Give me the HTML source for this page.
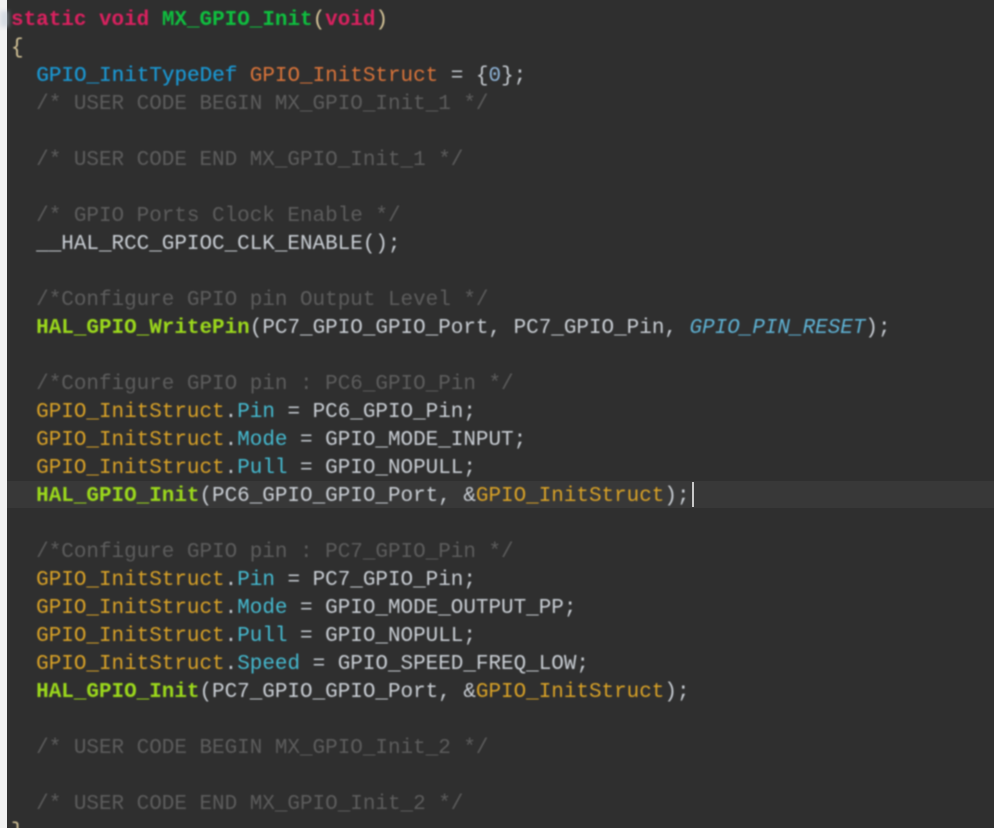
<!DOCTYPE html>
<html><head><meta charset="utf-8"><style>
html,body{margin:0;padding:0;background:#2f2f2f}
#r{position:relative;width:994px;height:828px;overflow:hidden;background:#2f2f2f}
#s{position:absolute;left:0;top:0;width:7px;height:828px;background:#f1f1f1}
#h{position:absolute;left:7px;right:0;top:481px;height:27px;background:#383838}
#c{position:absolute;left:692px;top:482px;width:2px;height:25px;background:#c8c8c8}
#m{position:absolute;left:0;top:11px;width:9px;height:16px;background:#b9c6d4;opacity:.45;filter:blur(2px)}
#t{position:absolute;left:11px;top:7px;font:20.95px/28px "Liberation Mono",monospace;color:#c9ced4;white-space:pre;filter:blur(.7px)}
.k{color:#d9215f;font-weight:bold}.f{color:#0fbf3f;font-weight:bold}.t{color:#1b95cf;text-shadow:.3px 0 0 #1b95cf}.v{color:#d9743a}
.c{color:#5d5d5d}.g{color:#9bd81c;font-weight:bold}.o{color:#d9a227}.p{color:#45b9cf}.e{color:#5fb2d4;font-style:italic}.b{color:#8fb4d8}.y{color:#d8c79a}
</style></head><body><div id="r">
<div id="h"></div><div id="s"></div><div id="m"></div><div id="c"></div>
<div id="t"><span class="k">static</span> <span class="k">void</span> <span class="f">MX_GPIO_Init</span><span class="y">(</span><span class="k">void</span><span class="y">)</span>
<span class="y">{</span>
  <span class="t">GPIO_InitTypeDef</span> <span class="v">GPIO_InitStruct</span> = {<span class="b">0</span>};
  <span class="c">/* USER CODE BEGIN MX_GPIO_Init_1 */</span>

  <span class="c">/* USER CODE END MX_GPIO_Init_1 */</span>

  <span class="c">/* GPIO Ports Clock Enable */</span>
  __HAL_RCC_GPIOC_CLK_ENABLE();

  <span class="c">/*Configure GPIO pin Output Level */</span>
  <span class="g">HAL_GPIO_WritePin</span>(PC7_GPIO_GPIO_Port, PC7_GPIO_Pin, <span class="e">GPIO_PIN_RESET</span>);

  <span class="c">/*Configure GPIO pin : PC6_GPIO_Pin */</span>
  <span class="o">GPIO_InitStruct</span>.<span class="p">Pin</span> = PC6_GPIO_Pin;
  <span class="o">GPIO_InitStruct</span>.<span class="p">Mode</span> = GPIO_MODE_INPUT;
  <span class="o">GPIO_InitStruct</span>.<span class="p">Pull</span> = GPIO_NOPULL;
  <span class="g">HAL_GPIO_Init</span>(PC6_GPIO_GPIO_Port, &amp;<span class="o">GPIO_InitStruct</span>);

  <span class="c">/*Configure GPIO pin : PC7_GPIO_Pin */</span>
  <span class="o">GPIO_InitStruct</span>.<span class="p">Pin</span> = PC7_GPIO_Pin;
  <span class="o">GPIO_InitStruct</span>.<span class="p">Mode</span> = GPIO_MODE_OUTPUT_PP;
  <span class="o">GPIO_InitStruct</span>.<span class="p">Pull</span> = GPIO_NOPULL;
  <span class="o">GPIO_InitStruct</span>.<span class="p">Speed</span> = GPIO_SPEED_FREQ_LOW;
  <span class="g">HAL_GPIO_Init</span>(PC7_GPIO_GPIO_Port, &amp;<span class="o">GPIO_InitStruct</span>);

  <span class="c">/* USER CODE BEGIN MX_GPIO_Init_2 */</span>

  <span class="c">/* USER CODE END MX_GPIO_Init_2 */</span>
<span class="y">}</span></div>
</div></body></html>
